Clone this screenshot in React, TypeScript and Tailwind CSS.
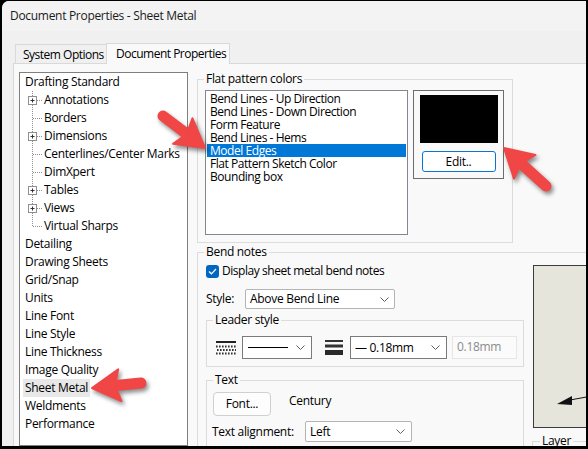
import React from "react";

type Pt = [number, number];

function Arrow({ tail, tip }: { tail: Pt; tip: Pt }) {
  const dx = tip[0] - tail[0];
  const dy = tip[1] - tail[1];
  const len = Math.hypot(dx, dy);
  const ux = dx / len;
  const uy = dy / len;
  const nx = -uy;
  const ny = ux;
  const headLen = 28;
  const headW = 32;
  const bx = tip[0] - ux * headLen;
  const by = tip[1] - uy * headLen;
  const pts = [
    [tip[0], tip[1]],
    [bx + (nx * headW) / 2, by + (ny * headW) / 2],
    [bx + ux * 5, by + uy * 5],
    [bx - (nx * headW) / 2, by - (ny * headW) / 2],
  ];
  return (
    <g>
      <line x1={tail[0]} y1={tail[1]} x2={bx + ux * 4} y2={by + uy * 4} stroke="#f14646" strokeWidth={11} strokeLinecap="round" />
      <polygon points={pts.map((p) => p.join(",")).join(" ")} fill="#f14646" stroke="#f14646" strokeWidth={2} strokeLinejoin="round" />
    </g>
  );
}

const Chevron = () => (
  <svg width="9" height="5" viewBox="0 0 9 5">
    <polyline points="0.5,0.5 4.5,4.5 8.5,0.5" fill="none" stroke="#5f5f5f" strokeWidth="1" />
  </svg>
);

function TreeGlyph({ plus, last }: { plus?: boolean; last?: boolean }) {
  return (
    <svg width="19" height="18" viewBox="0 0 19 18" className="shrink-0">
      <line x1="7.5" y1="0" x2="7.5" y2={last ? 9 : 18} stroke="#8f8f8f" strokeDasharray="1 1" />
      <line x1="8" y1="9.5" x2="18" y2="9.5" stroke="#8f8f8f" strokeDasharray="1 1" />
      {plus && (
        <g>
          <rect x="3.5" y="5.5" width="8" height="8" fill="#fff" stroke="#8f8f8f" />
          <line x1="5.5" y1="9.5" x2="9.5" y2="9.5" stroke="#333" />
          <line x1="7.5" y1="7.5" x2="7.5" y2="11.5" stroke="#333" />
        </g>
      )}
    </svg>
  );
}

const children = [
  { label: "Annotations", plus: true },
  { label: "Borders" },
  { label: "Dimensions", plus: true },
  { label: "Centerlines/Center Marks" },
  { label: "DimXpert" },
  { label: "Tables", plus: true },
  { label: "Views", plus: true },
  { label: "Virtual Sharps" },
];

const topLevel = [
  "Detailing",
  "Drawing Sheets",
  "Grid/Snap",
  "Units",
  "Line Font",
  "Line Style",
  "Line Thickness",
  "Image Quality",
  "Sheet Metal",
  "Weldments",
  "Performance",
];

const colorItems = [
  "Bend Lines - Up Direction",
  "Bend Lines - Down Direction",
  "Form Feature",
  "Bend Lines - Hems",
  "Model Edges",
  "Flat Pattern Sketch Color",
  "Bounding box",
];

export default function App() {
  return (
    <div className="relative w-[588px] h-[449px] overflow-hidden bg-black pt-[1px] pl-[2px] pr-[2px] pb-[3px] font-['Open_Sans',sans-serif] text-[12px] tracking-[-0.3px] text-black whitespace-nowrap">
      <div className="w-full h-full flex flex-col bg-[#f0f0f0] rounded-tl-[7px] overflow-hidden">
        {/* title bar */}
        <div className="h-[30px] shrink-0 bg-[#f3f3f3] pl-[8px] flex items-center text-[#1a1a1a]">
          Document Properties - Sheet Metal
        </div>

        {/* tabs */}
        <div className="mt-[12px] h-[20px] shrink-0 pl-[13px] flex items-end relative z-10 tracking-[-0.5px]">
          <div className="h-[19px] w-[91px] border-t border-l border-[#d9d9d9] bg-[#f0f0f0] pl-[7px] leading-[19px]">
            System Options
          </div>
          <div className="h-[21px] w-[124px] -mb-[1px] border-t border-l border-r border-[#d9d9d9] bg-[#f9f9f9] pl-[9px] leading-[19px]">
            Document Properties
          </div>
        </div>

        {/* page */}
        <div className="ml-[11px] flex-1 min-h-0 flex border-t border-l border-[#d9d9d9] bg-[#f9f9f9] overflow-hidden">
          {/* tree */}
          <div className="ml-[5px] mt-[8px] w-[169px] shrink-0 border border-[#7f7f7f] bg-white pl-[5px] leading-[18px]">
            <div className="h-[18px]">Drafting Standard</div>
            {children.map((c, i) => (
              <div key={c.label} className="h-[18px] flex">
                <TreeGlyph plus={c.plus} last={i === children.length - 1} />
                <span>{c.label}</span>
              </div>
            ))}
            {topLevel.map((t) => (
              <div key={t} className="h-[18px]">
                {t === "Sheet Metal" ? (
                  <span className="inline-block -ml-[2px] px-[2px] bg-[#e8e8e8]">{t}</span>
                ) : (
                  t
                )}
              </div>
            ))}
          </div>

          {/* right side */}
          <div className="ml-[9px] mt-[6px] w-[420px] shrink-0 flex flex-col">
            {/* flat pattern colors */}
            <fieldset className="w-[316px] border border-[#dcdcdc] pb-[7px] flex">
              <legend className="ml-[6px] px-[2px] leading-[18px]">Flat pattern colors</legend>
              <div className="mt-[2px] ml-[7px] w-[203px] h-[145px] border border-[#828790] bg-white pt-[1px] leading-[13px] tracking-[-0.45px]">
                {colorItems.map((c) => (
                  <div
                    key={c}
                    className={
                      c === "Model Edges"
                        ? "h-[13px] mx-[1px] px-[3px] bg-[#0078d7] text-white"
                        : "h-[13px] mx-[1px] px-[3px]"
                    }
                  >
                    {c}
                  </div>
                ))}
              </div>
              <div className="mt-[2px] ml-[5px] w-[91px] h-[89px] border border-[#6d6d6d] flex flex-col items-center pt-[4px]">
                <div className="w-[78px] h-[48px] bg-black" />
                <div className="mt-[8px] w-[74px] h-[21px] rounded-[3px] border border-[#0a74d0] bg-white flex items-center justify-center">
                  Edit..
                </div>
              </div>
            </fieldset>

            {/* bend notes */}
            <fieldset className="w-[420px] h-[260px] border border-[#dcdcdc] flex">
              <legend className="ml-[6px] px-[2px] leading-[18px]">Bend notes</legend>
              <div className="ml-[8px] w-[318px] shrink-0 flex flex-col">
                <div className="mt-[2px] h-[16px] flex items-center">
                  <div className="w-[13px] h-[13px] rounded-[3px] bg-[#0067c0] flex items-center justify-center">
                    <svg width="9" height="7" viewBox="0 0 9 7">
                      <polyline points="1,3.5 3.4,5.8 8,1" fill="none" stroke="#fff" strokeWidth="1.2" />
                    </svg>
                  </div>
                  <span className="ml-[3px] tracking-[-0.45px]">Display sheet metal bend notes</span>
                </div>

                <div className="mt-[10px] h-[20px] flex items-center">
                  <span className="w-[39px]">Style:</span>
                  <div className="w-[150px] h-[20px] border border-[#b4b4b4] rounded-[2px] bg-white flex items-center justify-between pl-[4px] pr-[5px]">
                    <span>Above Bend Line</span>
                    <Chevron />
                  </div>
                </div>

                <fieldset className="mt-[2px] w-[318px] border border-[#dcdcdc] pb-[7px]">
                  <legend className="ml-[6px] px-[2px] leading-[18px]">Leader style</legend>
                  <div className="mt-[7px] h-[23px] flex items-center">
                    <svg width="20" height="14" viewBox="0 0 20 14" className="ml-[9px] shrink-0">
                      <rect x="0" y="0" width="20" height="2" fill="#222" />
                      {[4.5, 8, 11.5].map((y) =>
                        [0, 3, 6, 9, 12, 15, 18].map((x) => (
                          <rect key={`${x}-${y}`} x={x + (y === 8 ? 1 : 0)} y={y} width="1.6" height="2" fill="#333" />
                        ))
                      )}
                    </svg>
                    <div className="ml-[6px] w-[70px] h-[23px] border border-[#7a7a7a] bg-white flex items-center justify-between pl-[5px] pr-[6px]">
                      <div className="w-[40px] h-[1px] bg-black" />
                      <Chevron />
                    </div>
                    <svg width="18" height="16" viewBox="0 0 18 16" className="ml-[13px] shrink-0">
                      <rect x="0" y="0" width="18" height="2" fill="#333" />
                      <rect x="0" y="4.5" width="18" height="3" fill="#333" />
                      <rect x="0" y="10" width="18" height="5" fill="#2a2a2a" />
                    </svg>
                    <div className="ml-[7px] w-[97px] h-[23px] border border-[#7a7a7a] bg-white flex items-center justify-between pl-[4px] pr-[6px]">
                      <span>— 0.18mm</span>
                      <Chevron />
                    </div>
                    <div className="ml-[5px] w-[65px] h-[23px] border border-[#e6e6e6] bg-[#fbfbfb] pl-[4px] leading-[20px] text-[#8c8c8c]">
                      0.18mm
                    </div>
                  </div>
                </fieldset>

                <fieldset className="mt-[4px] w-[318px] h-[120px] border border-[#dcdcdc]">
                  <legend className="ml-[6px] px-[2px] leading-[18px]">Text</legend>
                  <div className="mt-[3px] flex">
                    <div className="ml-[6px] w-[58px] h-[24px] rounded-[4px] border border-[#d0d0d0] bg-[#fdfdfd] flex items-center justify-center">
                      Font...
                    </div>
                    <span className="ml-[18px] leading-[18px]">Century</span>
                  </div>
                  <div className="mt-[5px] h-[21px] flex items-center">
                    <span className="ml-[5px] w-[93px]">Text alignment:</span>
                    <div className="w-[107px] h-[21px] border border-[#b4b4b4] rounded-[2px] bg-white flex items-center justify-between pl-[4px] pr-[6px]">
                      <span>Left</span>
                      <Chevron />
                    </div>
                  </div>
                </fieldset>
              </div>

              <div className="ml-[8px] flex-1 flex flex-col">
                <div className="mt-[4px] ml-[1px] h-[163px] border border-[#3c3c3c] bg-[#e6e5db]">
                  <svg width="80" height="161" viewBox="0 0 80 161">
                    <line x1="36" y1="134" x2="80" y2="126" stroke="#111" strokeWidth="1" />
                    <polygon points="23,138 38,130 38,139" fill="#111" />
                  </svg>
                </div>
                <fieldset className="mt-[4px] h-[40px] border border-[#dcdcdc]">
                  <legend className="ml-[7px] px-[2px] leading-[18px]">Layer</legend>
                </fieldset>
              </div>
            </fieldset>
          </div>
        </div>
      </div>

      {/* callout arrows */}
      <svg
        width="588"
        height="449"
        viewBox="0 0 588 449"
        className="absolute inset-0 pointer-events-none drop-shadow-[2px_3px_2px_rgba(0,0,0,0.45)]"
      >
        <Arrow tail={[163, 116]} tip={[205, 148]} />
        <Arrow tail={[546, 186]} tip={[504, 148]} />
        <Arrow tail={[141, 383]} tip={[92, 388]} />
      </svg>
    </div>
  );
}
